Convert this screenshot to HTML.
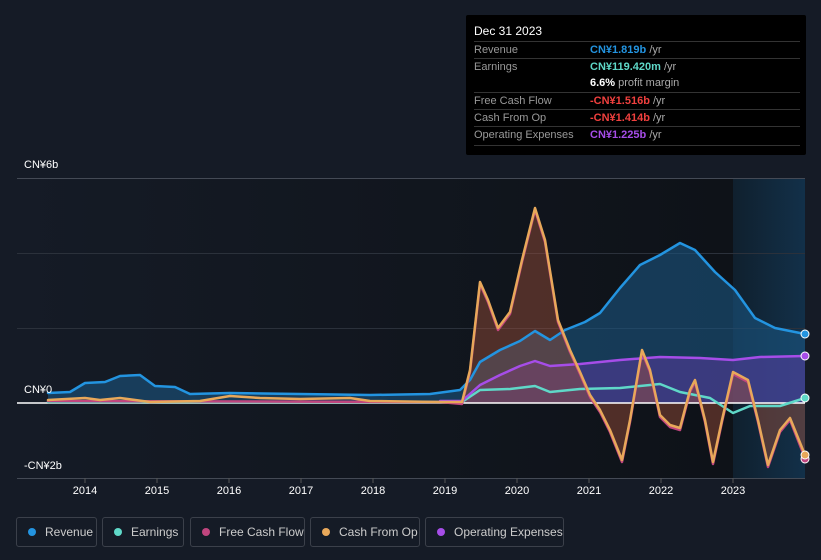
<!DOCTYPE html>
<html><head><meta charset="utf-8"><style>
body{margin:0;width:821px;height:560px;background:#151b26;font-family:"Liberation Sans","Noto Sans CJK SC",sans-serif;overflow:hidden;position:relative;color:#fff}
.tt{position:absolute;left:466px;top:15px;width:340px;height:140px;background:#000;border-radius:2px}
.tt .h{position:absolute;left:8px;top:9px;font-size:12px;color:#fff}
.row{position:absolute;left:8px;width:326px;height:17px;border-top:1px solid #333;font-size:11px;color:#999}
.row span{position:absolute;left:116px;top:2px;font-weight:bold}
.row i{font-style:normal;font-weight:normal;color:#aaa}
.row .l{position:absolute;left:0;top:2px}
.leg{position:absolute;top:517px;height:30px;border:1px solid #3b404a;border-radius:3px;font-size:12px;color:#ccc;box-sizing:border-box;white-space:nowrap}
.leg b{position:absolute;left:11px;top:10px;width:8px;height:8px;border-radius:50%}
.leg span{position:absolute;top:7px;left:28px}
.yl{position:absolute;left:24px;font-size:11px;color:#fff}
.xl{position:absolute;top:485px;font-size:11px;color:#fff;width:40px;text-align:center}
</style></head><body>
<svg width="821" height="560" style="position:absolute;left:0;top:0">
<defs>
<linearGradient id="bg" x1="0" x2="1"><stop offset="0" stop-color="#151b26"/><stop offset="1" stop-color="#0e1218"/></linearGradient>
<linearGradient id="hl" x1="0" x2="1"><stop offset="0" stop-color="#10202e"/><stop offset="1" stop-color="#123049"/></linearGradient>
</defs>
<rect x="17" y="178" width="716" height="300" fill="url(#bg)"/>
<rect x="733" y="178" width="72" height="300" fill="url(#hl)"/>
<line x1="17" y1="178.5" x2="805" y2="178.5" stroke="#444a55"/>
<line x1="17" y1="253.5" x2="805" y2="253.5" stroke="#2b313b"/>
<line x1="17" y1="328.5" x2="805" y2="328.5" stroke="#2b313b"/>
<line x1="17" y1="478.5" x2="805" y2="478.5" stroke="#444a55"/>
<path d="M48,393 L70,392 L85,383 L105,382 L120,376 L140,375 L155,386 L175,387 L190,394 L230,393 L300,394 L370,395 L430,394 L460,390 L470,380 L480,362 L500,350 L520,341 L535,331 L550,340 L565,330 L585,322 L600,313 L620,288 L640,265 L660,255 L680,243 L695,250 L715,272 L735,290 L755,318 L775,328 L805,334 L805,403 L48,403Z" fill="#1b5580" fill-opacity="0.6"/>
<path d="M440,401 L462,401 L480,385 L500,375 L520,366 L535,361 L550,366 L580,364 L620,360 L660,357 L700,358 L733,360 L760,357 L805,356 L805,403 L440,403Z" fill="#5a3a9e" fill-opacity="0.55"/>
<path d="M462,403 L470,370 L480,282 L488,300 L498,328 L510,312 L522,260 L535,208 L545,240 L558,320 L570,350 L580,372 L590,395 L600,410 L610,430 L622,460 L630,420 L642,350 L650,370 L660,415 L670,425 L680,428 L690,390 L695,380 L705,420 L713,462 L722,420 L733,372 L748,380 L758,420 L768,465 L780,430 L790,418 L805,455 L805,403Z" fill="#a0503a" fill-opacity="0.45"/>
<line x1="17" y1="403" x2="805" y2="403" stroke="#fff" stroke-width="1.5"/>
<g fill="none" stroke-width="2.5" stroke-linejoin="round" stroke-linecap="round">
<path d="M48,393 L70,392 L85,383 L105,382 L120,376 L140,375 L155,386 L175,387 L190,394 L230,393 L300,394 L370,395 L430,394 L460,390 L470,380 L480,362 L500,350 L520,341 L535,331 L550,340 L565,330 L585,322 L600,313 L620,288 L640,265 L660,255 L680,243 L695,250 L715,272 L735,290 L755,318 L775,328 L805,334" stroke="#2394e0"/>
<path d="M48,402 L200,402 L300,402 L440,402 L462,402 L480,390 L510,389 L535,386 L550,392 L580,389 L620,388 L660,384 L680,392 L710,398 L733,413 L750,406 L780,406 L805,398" stroke="#5fd8c8"/>
<path d="M440,401 L462,401 L480,385 L500,375 L520,366 L535,361 L550,366 L580,364 L620,360 L660,357 L700,358 L733,360 L760,357 L805,356" stroke="#a64de8"/>
<path d="M48,401 L440,402 L462,404 L470,372 L480,284 L488,302 L498,330 L510,314 L522,262 L535,210 L545,242 L558,322 L570,352 L580,374 L590,397 L600,412 L610,432 L622,462 L630,422 L642,352 L650,372 L660,417 L670,427 L680,430 L690,392 L695,382 L705,422 L713,464 L722,422 L733,374 L748,382 L758,422 L768,467 L780,432 L790,420 L805,458" stroke="#c0457e"/>
<path d="M48,400 L85,398 L100,400 L120,398 L150,402 L200,401 L230,396 L260,398 L300,399 L350,398 L370,401 L440,402 L462,402 L470,370 L480,282 L488,300 L498,328 L510,312 L522,260 L535,208 L545,240 L558,320 L570,350 L580,372 L590,395 L600,410 L610,430 L622,460 L630,420 L642,350 L650,370 L660,415 L670,425 L680,428 L690,390 L695,380 L705,420 L713,462 L722,420 L733,372 L748,380 L758,420 L768,465 L780,430 L790,418 L805,455" stroke="#e8a85a"/>
</g>
<g stroke="#fff" stroke-width="1">
<circle cx="805" cy="334" r="4" fill="#2394e0"/><circle cx="805" cy="356" r="4" fill="#a64de8"/><circle cx="805" cy="398" r="4" fill="#5fd8c8"/><circle cx="805" cy="459" r="4" fill="#c0457e"/><circle cx="805" cy="455" r="4" fill="#e8a85a"/>
</g>
<g stroke="#555" ><line x1="85" y1="478" x2="85" y2="483"/><line x1="157" y1="478" x2="157" y2="483"/><line x1="229" y1="478" x2="229" y2="483"/><line x1="301" y1="478" x2="301" y2="483"/><line x1="373" y1="478" x2="373" y2="483"/><line x1="445" y1="478" x2="445" y2="483"/><line x1="517" y1="478" x2="517" y2="483"/><line x1="589" y1="478" x2="589" y2="483"/><line x1="661" y1="478" x2="661" y2="483"/><line x1="733" y1="478" x2="733" y2="483"/></g>
</svg>
<div class="yl" style="top:159px">CN¥6b</div>
<div class="yl" style="top:384px">CN¥0</div>
<div class="yl" style="top:460px">-CN¥2b</div>
<div class="xl" style="left:65px">2014</div><div class="xl" style="left:137px">2015</div><div class="xl" style="left:209px">2016</div><div class="xl" style="left:281px">2017</div><div class="xl" style="left:353px">2018</div><div class="xl" style="left:425px">2019</div><div class="xl" style="left:497px">2020</div><div class="xl" style="left:569px">2021</div><div class="xl" style="left:641px">2022</div><div class="xl" style="left:713px">2023</div>
<div class="tt">
<div class="h">Dec 31 2023</div>
<div class="row" style="top:26px"><div class="l">Revenue</div><span style="color:#2394e0">CN¥1.819b <i>/yr</i></span></div>
<div class="row" style="top:43px"><div class="l">Earnings</div><span style="color:#5fd8c8">CN¥119.420m <i>/yr</i></span></div>
<div class="row" style="top:60px;border-top:none"><span style="color:#fff">6.6% <i>profit margin</i></span></div>
<div class="row" style="top:77px"><div class="l">Free Cash Flow</div><span style="color:#f0403e">-CN¥1.516b <i>/yr</i></span></div>
<div class="row" style="top:94px"><div class="l">Cash From Op</div><span style="color:#f0403e">-CN¥1.414b <i>/yr</i></span></div>
<div class="row" style="top:111px"><div class="l">Operating Expenses</div><span style="color:#a64de8">CN¥1.225b <i>/yr</i></span></div>
<div class="row" style="top:130px;height:0"></div>
</div>
<div class="leg" style="left:16px;width:81px"><b style="background:#2394e0"></b><span>Revenue</span></div>
<div class="leg" style="left:102px;width:82px"><b style="background:#5fd8c8"></b><span>Earnings</span></div>
<div class="leg" style="left:190px;width:115px"><b style="background:#c0457e"></b><span>Free Cash Flow</span></div>
<div class="leg" style="left:310px;width:110px"><b style="background:#e8a85a"></b><span>Cash From Op</span></div>
<div class="leg" style="left:425px;width:139px"><b style="background:#a64de8"></b><span>Operating Expenses</span></div>
</body></html>
